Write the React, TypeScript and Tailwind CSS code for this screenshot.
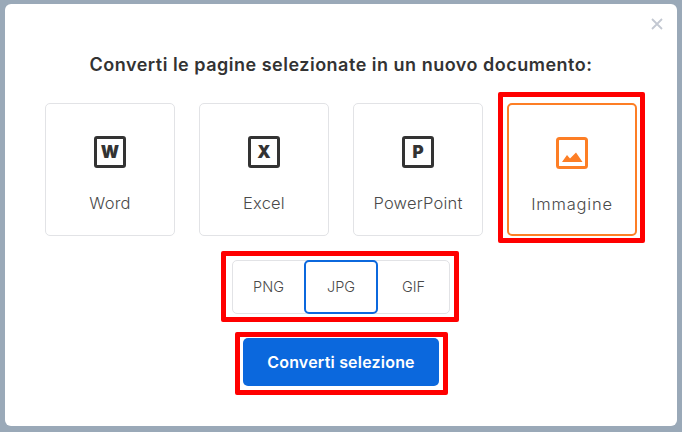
const font = { fontFamily: "Inter, 'Noto Sans', sans-serif" };

function DocIcon({ letter }: { letter: string }) {
  return (
    <div className="w-8 h-8 rounded-[3px] border-[3px] border-[#333333] flex items-center justify-center text-[17px] leading-none font-black text-[#333333]">
      {letter}
    </div>
  );
}

function ImageIcon() {
  return (
    <svg width="32" height="32" viewBox="0 0 32 32" fill="none">
      <rect x="1.5" y="1.5" width="29" height="29" rx="2" stroke="#fd7e25" strokeWidth="3" />
      <path d="M6 25 L11 18 L14 21.5 L20 15.5 L26.5 25 Z" fill="#fd7e25" />
    </svg>
  );
}

function Card({ label, icon, active }: { label: string; icon: React.ReactNode; active?: boolean }) {
  return (
    <div className={`relative w-[130px] h-[133px] rounded-[5px] bg-white flex flex-col items-center pt-[32px] ${active ? "border-2 border-[#fd7e25]" : "border border-[#e2e3e6]"}`}>
      {icon}
      <div className={`mt-[23px] text-[16.5px] leading-[24px] font-light text-[#4a4a4a] ${active ? "tracking-[0.8px]" : "tracking-[0.2px]"}`}>{label}</div>
      {active && <div className="absolute -left-[11px] -right-[10px] -top-[13px] -bottom-[9px] border-[5px] border-[#ff0000] rounded-[2px] pointer-events-none" />}
    </div>
  );
}

export default function App() {
  return (
    <div style={font} className="w-[682px] h-[432px] bg-[#9aa9b8] overflow-hidden pl-[5px] pt-1">
      <div className="relative w-[672px] h-[422px] bg-white rounded-[6px] flex flex-col items-center pt-[47px]">
        <svg className="absolute right-[14px] top-[14px]" width="12" height="12" viewBox="0 0 12 12" fill="none">
          <path d="M1 1 L11 11 M11 1 L1 11" stroke="#c3c8d2" strokeWidth="1.8" />
        </svg>
        <h1 className="text-[18px] leading-[28px] font-semibold text-[#333333] tracking-[0.5px]">
          Converti le pagine selezionate in un nuovo documento:
        </h1>
        <div className="flex gap-6 mt-[24px]">
          <Card label="Word" icon={<DocIcon letter="W" />} />
          <Card label="Excel" icon={<DocIcon letter="X" />} />
          <Card label="PowerPoint" icon={<DocIcon letter="P" />} />
          <Card label="Immagine" icon={<ImageIcon />} active />
        </div>
        <div className="relative mt-6 w-[218px] h-[54px] border border-[#e2e3e6] rounded-[5px] flex text-[14.5px] font-light text-[#4a4a4a]">
          <div className="w-[71px] flex items-center justify-center">PNG</div>
          <div className="w-[74px] -my-px border-2 border-[#0b68dd] rounded-[5px] flex items-center justify-center">JPG</div>
          <div className="flex-1 flex items-center justify-center">GIF</div>
          <div className="absolute -left-[12px] -right-[10px] -top-[10px] -bottom-[9px] border-[5px] border-[#ff0000] rounded-[2px] pointer-events-none" />
        </div>
        <button className="relative mt-[24px] w-[196px] h-[48px] rounded-[5px] bg-[#0b68dd] text-white text-[16px] tracking-[0.2px] font-semibold">
          Converti selezione
          <div className="absolute -left-2 -right-[9px] -top-[6px] -bottom-[9px] border-[5px] border-[#ff0000] rounded-[2px] pointer-events-none" />
        </button>
      </div>
    </div>
  );
}
